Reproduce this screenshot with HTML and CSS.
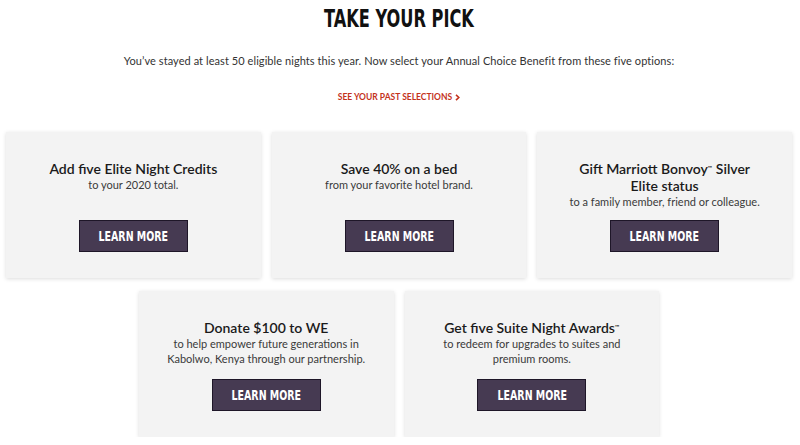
FILE: index.html
```html
<!DOCTYPE html>
<html>
<head>
<meta charset="utf-8">
<link rel="stylesheet" href="styles.css">
</head>
<body>
<main class="page">
  <h1 class="heading"><span class="narrow">TAKE YOUR PICK</span></h1>
  <p class="intro">You’ve stayed at least 50 eligible nights this year. Now select your Annual Choice Benefit from these five options:</p>
  <a class="past-link" href="#">SEE YOUR PAST SELECTIONS <svg class="chev" width="5" height="7" viewBox="0 0 5 7"><path d="M1 0.8 L3.8 3.5 L1 6.2" fill="none" stroke="#c4321c" stroke-width="1.6"/></svg></a>
  <section class="row row-three">
    <div class="card">
      <h2 class="card-title">Add five Elite Night Credits</h2>
      <p class="card-sub">to your 2020 total.</p>
      <a class="btn" href="#"><span class="narrow">LEARN MORE</span></a>
    </div>
    <div class="card">
      <h2 class="card-title">Save 40% on a bed</h2>
      <p class="card-sub">from your favorite hotel brand.</p>
      <a class="btn" href="#"><span class="narrow">LEARN MORE</span></a>
    </div>
    <div class="card">
      <h2 class="card-title">Gift Marriott Bonvoy<sup class="tm">™</sup> Silver<br>Elite status</h2>
      <p class="card-sub">to a family member, friend or colleague.</p>
      <a class="btn" href="#"><span class="narrow">LEARN MORE</span></a>
    </div>
  </section>
  <section class="row row-two">
    <div class="card">
      <h2 class="card-title">Donate $100 to WE</h2>
      <p class="card-sub">to help empower future generations in<br>Kabolwo, Kenya through our partnership.</p>
      <a class="btn" href="#"><span class="narrow">LEARN MORE</span></a>
    </div>
    <div class="card">
      <h2 class="card-title">Get five Suite Night Awards<sup class="tm">™</sup></h2>
      <p class="card-sub">to redeem for upgrades to suites and<br>premium rooms.</p>
      <a class="btn" href="#"><span class="narrow">LEARN MORE</span></a>
    </div>
  </section>
</main>
</body>
</html>
```
FILE: styles.css
```css
* { box-sizing: border-box; }
html, body { margin: 0; padding: 0; background: #fff; }
body { font-family: Lato, "Open Sans", sans-serif; color: #1c1c1c; }
.page {
  width: 800px;
  padding: 0 8px 0 6px;
  display: flex;
  flex-direction: column;
  align-items: center;
}
.narrow {
  display: inline-block;
  transform: scaleX(0.75);
  transform-origin: center;
  white-space: nowrap;
}
.heading {
  margin: 5px 0 0;
  font-family: "DejaVu Sans Condensed", "DejaVu Sans", sans-serif;
  font-weight: 700;
  font-size: 24px;
  line-height: 28px;
  color: #111;
}
.intro {
  margin: 21px 0 0;
  font-size: 11px;
  line-height: 14px;
  letter-spacing: 0.07px;
  color: #333;
}
.past-link {
  margin-top: 23px;
  font-size: 8.5px;
  font-weight: 700;
  line-height: 12px;
  color: #c4321c;
  text-decoration: none;
  display: flex;
  align-items: center;
  gap: 3px;
}
.chev { display: block; margin-top: 1px; }
.row {
  width: 100%;
  display: flex;
  justify-content: center;
  gap: 11px;
}
.row-three { margin-top: 29px; }
.row-two { margin-top: 13px; }
.card {
  width: 254.67px;
  height: 146px;
  background: #f3f3f3;
  box-shadow: 0 1px 4px rgba(0,0,0,0.14);
  display: flex;
  flex-direction: column;
  align-items: center;
  text-align: center;
  padding: 28px 10px 26px;
}
.card-title {
  margin: 0;
  font-size: 14px;
  font-weight: 600;
  line-height: 17px;
  color: #1a1a1a;
}
.tm { font-size: 6px; vertical-align: top; position: relative; top: -1px; }
.card-sub {
  margin: 0;
  font-size: 11px;
  line-height: 15px;
  color: #3a3a3a;
}
.btn {
  margin-top: auto;
  width: 109px;
  height: 32px;
  background: #463a52;
  border: 1px solid #1e1628;
  color: #fff;
  text-decoration: none;
  font-family: "DejaVu Sans Condensed", "DejaVu Sans", sans-serif;
  font-weight: 700;
  font-size: 14px;
  display: flex;
  align-items: center;
  justify-content: center;
}
```
